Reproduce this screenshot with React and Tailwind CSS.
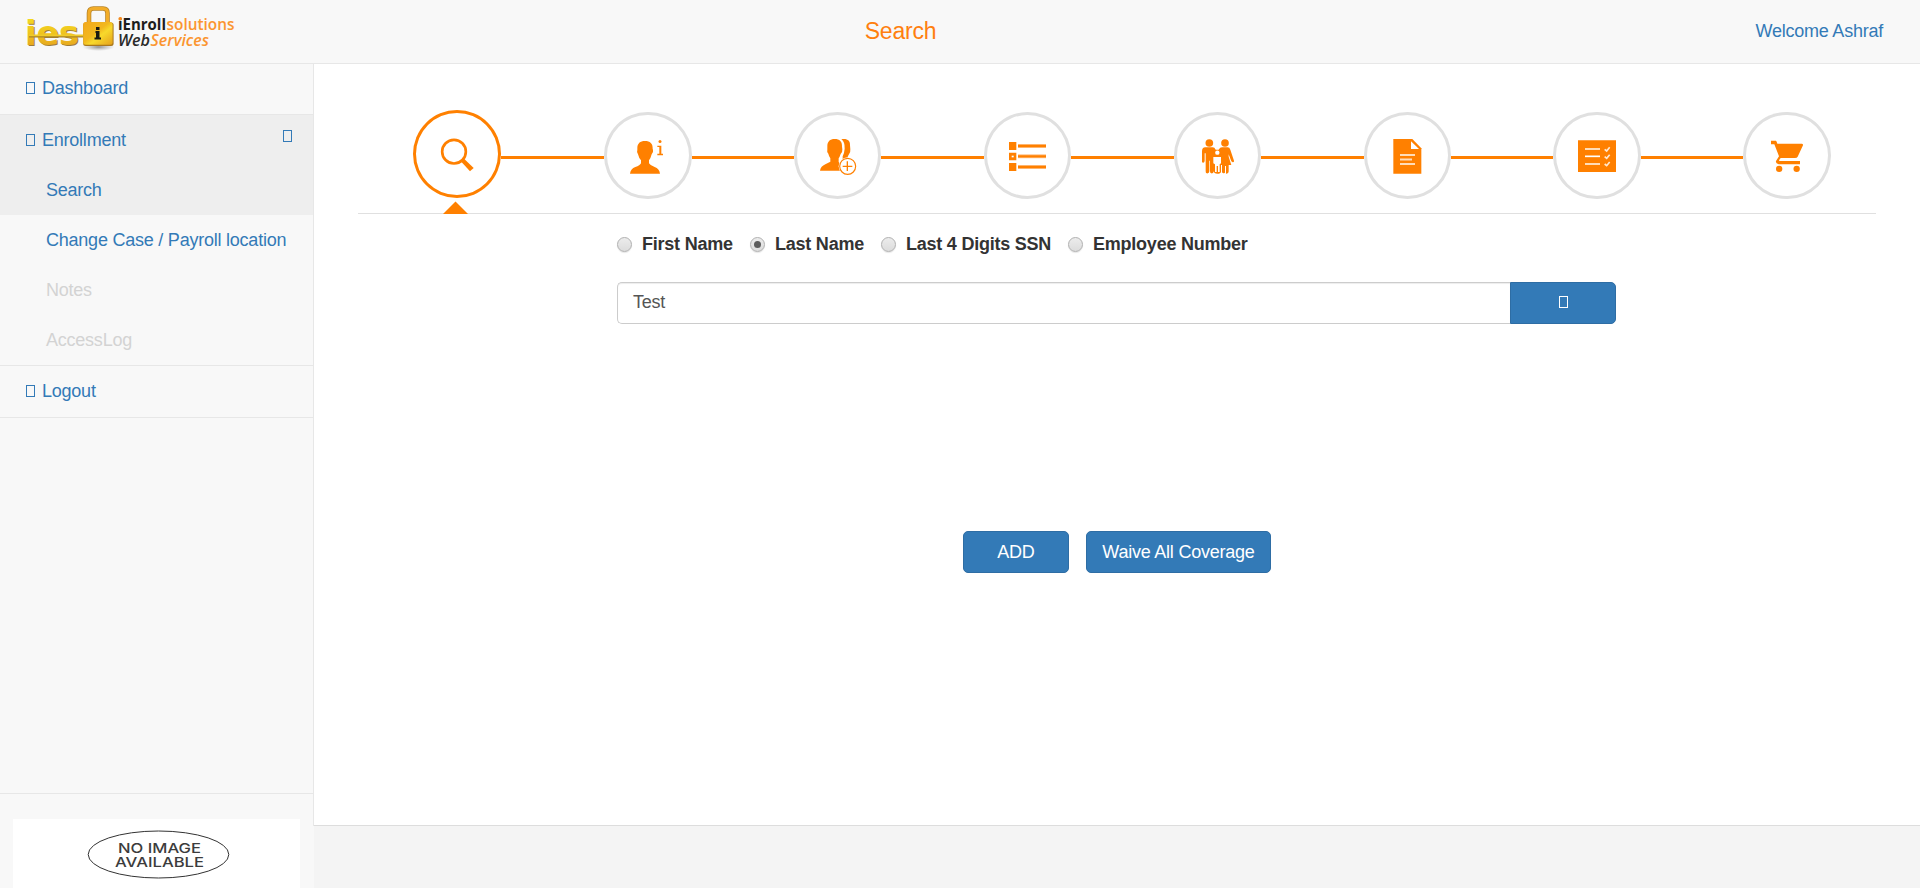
import React from "react";

function Glyph({ className = "" }) {
  return <span aria-hidden="true" className={`inline-block h-3 w-[9px] shrink-0 border ${className}`} />;
}

function Logo() {
  return (
    <svg className="h-[52px] w-[216px]" viewBox="24 2 216 52" aria-label="iEnroll solutions Web Services">
      <defs>
        <linearGradient id="gold" x1="0" y1="0" x2="0" y2="1">
          <stop offset="0" stopColor="#f4e020" />
          <stop offset="0.5" stopColor="#f0c41e" />
          <stop offset="1" stopColor="#e29a20" />
        </linearGradient>
        <linearGradient id="lock" x1="0" y1="0" x2="1" y2="1">
          <stop offset="0" stopColor="#f3a81c" />
          <stop offset="0.45" stopColor="#f2b81e" />
          <stop offset="0.6" stopColor="#f8d92c" />
          <stop offset="1" stopColor="#e5a01a" />
        </linearGradient>
        <radialGradient id="shade">
          <stop offset="0" stopColor="#777" stopOpacity="0.8" />
          <stop offset="1" stopColor="#999" stopOpacity="0" />
        </radialGradient>
      </defs>
      <g fontFamily="'DejaVu Sans', sans-serif" fontWeight="700" fontSize="34">
        <text
          x="25"
          y="44.800"
          textLength="54"
          lengthAdjust="spacingAndGlyphs"
          fill="url(#gold)"
          className="[text-shadow:1px_1px_0_#9c7c3a]"
        >
          ies
        </text>
      </g>
      <path d="M29 36.8H83" stroke="#a98225" strokeWidth="1.400" />
      <path d="M29 35.3H83" stroke="#f0cb2a" strokeWidth="1.800" />
      <ellipse cx="98.5" cy="47" rx="16" ry="4" fill="url(#shade)" />
      <path d="M89 24V13Q89 8.500 93.500 8.500H103Q107.500 8.500 107.500 13V24" fill="none" stroke="#b98528" strokeWidth="4.600" />
      <path d="M89 24V13Q89 8.500 93.500 8.500H103Q107.500 8.500 107.500 13V24" fill="none" stroke="#f2ac28" strokeWidth="3" />
      <rect x="83.200" y="22.500" width="30.400" height="23.500" rx="2.500" fill="#a9781d" />
      <rect x="83.200" y="22" width="29.400" height="22.800" rx="2.500" fill="url(#lock)" />
      <path d="M95.500 31H99.500V37.500H101V39.500H94.500V37.500H96V33H95.500ZM96 27H99.500V30H96Z" fill="#1b1a12" />
      <g fontFamily="'Open Sans', 'Noto Sans', sans-serif" fontSize="16.500">
        <text x="118" y="30" fontWeight="700" fill="#1d1d1b" textLength="48" lengthAdjust="spacingAndGlyphs">iEnroll</text>
        <text x="166.500" y="30" fontWeight="600" fill="#fb9530" textLength="68" lengthAdjust="spacingAndGlyphs">solutions</text>
        <text x="118" y="45.500" fontWeight="600" fontStyle="italic" fill="#2a2a2a" textLength="32" lengthAdjust="spacingAndGlyphs">Web</text>
        <text x="150.500" y="45.500" fontWeight="600" fontStyle="italic" fill="#fb9530" textLength="58.500" lengthAdjust="spacingAndGlyphs">Services</text>
      </g>
      <rect x="118.500" y="17" width="3.600" height="3.200" rx="1.500" fill="#f58a20" />
    </svg>
  );
}

const steps = [
  {
    name: "Search",
    circle: "w-[88px]",
    line: "w-[103px]",
    view: "189 60 264 264",
    art: (
      <>
        <circle cx="312" cy="185" r="35.500" fill="none" stroke="#ff8000" strokeWidth="8" />
        <path d="M331 212 340 204 371 234 360 244Z" />
      </>
    ),
  },
  {
    name: "Personal information",
    circle: "w-[88px]",
    line: "w-[102px]",
    view: "762 66 264 261",
    art: (
      <>
        <path d="M885 153C900 153 909 161 908 176L909 180Q911 188 905 193Q902 205 897 211V220Q901 227 914 231Q928 236 930 251H840Q842 236 856 231Q870 227 873 220V211Q867 205 864 193Q859 188 862 180L862 174C862 161 870 153 885 153Z" />
        <circle cx="930" cy="154.500" r="4.500" />
        <path d="M922 167H934V191H939V196H922V191H928V171H922Z" />
      </>
    ),
  },
  {
    name: "Dependents",
    circle: "w-[87px]",
    line: "w-[103px]",
    view: "252 66 261 261",
    art: (
      <>
        <path d="M394 148C411 145 421 151 420 166L421 178Q422 187 417 193Q413 199 411 206L398 215V199Q403 189 404 176Q405 156 394 148Z" />
        <path d="M374 147C389 147 397 155 396 170L397 178Q398 187 392 192Q389 201 386 205V216Q392 221 388 230Q389 238 394 242H330Q332 229 346 223L361 215V205Q357 200 355 191Q350 186 352 178L352 168C352 155 360 147 374 147Z" />
        <circle cx="413" cy="229" r="27" fill="#fff" />
        <circle cx="413" cy="229" r="24" fill="none" stroke="#ff8000" strokeWidth="3.500" />
        <path d="M398 229H427M412 214V243" stroke="#ff8000" strokeWidth="4" />
      </>
    ),
  },
  {
    name: "Benefits",
    circle: "w-[87px]",
    line: "w-[103px]",
    view: "822 66 261 261",
    art: (
      <>
        <path d="M897 156H919V180H897ZM897 188H919V211H897ZM897 219H919V243H897Z" />
        <path d="M924 168H1008M924 199H1008M924 231H1008" stroke="#ffc690" strokeWidth="12" />
        <path d="M924 168H1008M924 199H1008M924 231H1008" stroke="#ff8000" strokeWidth="7" />
        <path d="M905 197H911V202H905Z" fill="#fff" />
      </>
    ),
  },
  {
    name: "Beneficiaries",
    circle: "w-[87px]",
    line: "w-[103px]",
    view: "222 66 261 261",
    art: (
      <>
        <circle cx="328" cy="159" r="11.500" />
        <circle cx="375" cy="159" r="11.500" />
        <path d="M316 172H338Q344 172 347 179H356Q360 172 366 172H383Q389 172 391 179L402 212Q403 217 398 217L394 214L386 193V200L394 225H386V244Q386 251 378 251V228H375V248Q368 253 366 246V225H363V245Q362 251 352 251Q342 251 341 244Q341 251 334 250Q330 250 330 244V212H328V244Q328 251 320 250Q317 250 317 244V190H314V213Q313 220 306 217V184Q306 172 316 172Z" />
        <circle cx="352" cy="188" r="6.500" fill="#fff" />
        <path d="M340 201H363V220L359 223V246H354V228H350V246H345V223L340 220Z" fill="#fff" />
      </>
    ),
  },
  {
    name: "Documents",
    circle: "w-[87px]",
    line: "w-[102px]",
    view: "792 66 261 261",
    art: (
      <>
        <path d="M880 147H937L964 175V251H880Z" />
        <path d="M933 154V177H957Z" fill="#fff" />
        <path d="M900 195H945M900 208.500H936M900 222H945" stroke="#ffdcb8" strokeWidth="6" />
      </>
    ),
  },
  {
    name: "Questions",
    circle: "w-[88px]",
    line: "w-[102px]",
    view: "219 66 264 261",
    art: (
      <>
        <path d="M294 151H408V246H294Z" />
        <path d="M315 177H360M315 222H360" stroke="#ffdcb8" strokeWidth="6" />
        <path d="M315 199H360" stroke="#fff" strokeWidth="5" />
        <path d="M374 178 380 183 389 172M374 200 380 205 389 194M374 222 380 227 389 216" fill="none" stroke="#ffe8d2" strokeWidth="5" />
      </>
    ),
  },
  {
    name: "Checkout",
    circle: "w-[88px]",
    view: "789 66 264 261",
    art: (
      <>
        <path d="M873 152H888Q890 153 892 161H966Q970 162 969 166L953 200Q951 204 945 204H902L897 211Q896 213 900 213H960V223H896Q886 221 888 213L897 199L883 163H873Z" />
        <circle cx="897.500" cy="236.500" r="9.500" />
        <circle cx="950" cy="236.500" r="9.500" />
      </>
    ),
  },
];

function Steps() {
  return (
    <ol className="flex items-start pl-[55px]">
      {steps.map((step, i) => (
        <li key={step.name} className="flex items-start">
          <div className={i === 0 ? "flex flex-col items-center" : "mt-0.5"}>
            <div
              className={`rounded-full inset-ring-[3px] ${step.circle} ${
                i === 0 ? "h-[88px] inset-ring-[#ff8000]" : "h-[87px] inset-ring-[#e0e0e0]"
              }`}
            >
              <svg viewBox={step.view} className="size-full" fill="#ff8000" aria-label={step.name}>
                {step.art}
              </svg>
            </div>
            {i === 0 && (
              <svg className="mt-[3px] mr-[3px] -mb-px h-[13px] w-[25px]" viewBox="0 0 25 13" fill="#ff8000">
                <path d="M0 13 12.500 0.500 25 13Z" />
              </svg>
            )}
          </div>
          {step.line && <div className={`mt-[46px] h-[3px] bg-[#ff8000] ${step.line}`} />}
        </li>
      ))}
    </ol>
  );
}

const options = [
  { label: "First Name", width: "w-[133px]" },
  { label: "Last Name", width: "w-[131px]", checked: true },
  { label: "Last 4 Digits SSN", width: "w-[187px]" },
  { label: "Employee Number", width: "w-[190px]" },
];

function Radio({ checked }) {
  return (
    <span className="flex size-[15px] shrink-0 items-center justify-center rounded-full border border-[#b0b0b0] bg-linear-to-b from-[#ececec] to-[#dcdcdc] shadow-[0_1px_1px_rgba(0,0,0,0.1)]">
      {checked && <span className="size-[7px] rounded-full bg-[#5c5c5c]" />}
    </span>
  );
}

function Sidebar() {
  return (
    <aside className="flex w-[314px] shrink-0 flex-col bg-[#f8f8f8] text-[#337ab7]">
      <nav className="flex h-[762px] flex-col border-r border-[#e7e7e7]">
        <a className="flex h-[51px] items-center gap-[7px] border-b border-[#e7e7e7] pb-0.5 pl-[26px]">
          <Glyph />
          Dashboard
        </a>
        <div className="border-b border-[#e7e7e7]">
          <a className="flex h-[50px] items-center gap-[7px] bg-[#eee] pr-[21px] pl-[26px]">
            <Glyph />
            Enrollment
            <Glyph className="mb-2 ml-auto" />
          </a>
          <a className="flex h-[50px] items-center bg-[#eee] pl-[46px]">Search</a>
          <a className="flex h-[50px] items-center pl-[46px]">Change Case / Payroll location</a>
          <a className="flex h-[50px] items-center pl-[46px] text-[#d3d3d3]">Notes</a>
          <a className="flex h-[50px] items-center pl-[46px] text-[#d3d3d3]">AccessLog</a>
        </div>
        <a className="flex h-[52px] items-center gap-[7px] border-b border-[#e7e7e7] pb-0.5 pl-[26px]">
          <Glyph />
          Logout
        </a>
        <div className="mt-auto h-[33px] border-t border-[#e7e7e7]" />
      </nav>
      <div className="-mt-[7px] mr-[14px] ml-[13px] flex-1 overflow-hidden bg-white">
        <svg className="h-[69px] w-[287px]" viewBox="13 819 287 69">
          <ellipse cx="158.500" cy="854.500" rx="70.300" ry="23.500" fill="none" stroke="#333" strokeWidth="1" />
          <g fontFamily="Inter, sans-serif" fontWeight="500" fontSize="13.700" fill="#3c3c3c" letterSpacing="0">
            <text x="118" y="852.500" textLength="83" lengthAdjust="spacingAndGlyphs">NO IMAGE</text>
            <text x="115" y="867" textLength="89" lengthAdjust="spacingAndGlyphs">AVAILABLE</text>
          </g>
        </svg>
      </div>
    </aside>
  );
}

export default function App() {
  return (
    <div className="flex h-[888px] w-full flex-col overflow-hidden bg-[#f4f4f4] font-['Liberation_Sans',Arial,sans-serif] text-[18px] leading-[26px] tracking-[-0.23px] text-[#333]">
      <header className="grid h-16 grid-cols-[1fr_auto_1fr] items-start border-b border-[#e7e7e7] bg-[#f8f8f8] pr-[37px] pl-6">
        <div className="pt-0.5 tracking-normal">
          <Logo />
        </div>
        <h1 className="mr-[106px] pt-[18px] text-[23px] text-[#ff7f0e]">Search</h1>
        <a className="justify-self-end pt-[18px] text-[#337ab7]">Welcome Ashraf</a>
      </header>
      <div className="flex min-h-0 flex-1">
        <Sidebar />
        <main className="h-[762px] flex-1 border-b border-[#ddd] bg-white pt-[46px] pr-[44px] pl-[44px]">
          <div className="flex h-[104px] flex-col border-b border-[#e0e0e0]">
            <Steps />
          </div>
          <div className="ml-[259px] w-[999px]">
            <div className="flex pt-[17px]">
              {options.map((o) => (
                <label key={o.label} className={`flex h-[26px] items-center gap-2.5 font-bold whitespace-nowrap ${o.width}`}>
                  <Radio checked={o.checked} />
                  {o.label}
                </label>
              ))}
            </div>
            <div className="mt-[25px] flex">
              <div className="flex h-[42px] flex-1 items-center rounded-l-[5px] border border-r-0 border-[#ccc] px-[15px] pb-0.5 text-[#555] shadow-[inset_0_1px_1px_rgba(0,0,0,0.075)]">
                Test
              </div>
              <button className="flex h-[42px] w-[106px] items-center justify-center rounded-r-[5px] border border-[#2e6da4] bg-[#337ab7] pb-0.5 text-white">
                <Glyph />
              </button>
            </div>
            <div className="flex gap-[17px] pt-[207px] pl-[346px] text-white">
              <button className="h-[42px] w-[106px] rounded-[5px] border border-[#2e6da4] bg-[#337ab7]">ADD</button>
              <button className="h-[42px] w-[185px] rounded-[5px] border border-[#2e6da4] bg-[#337ab7] whitespace-nowrap">
                Waive All Coverage
              </button>
            </div>
          </div>
        </main>
      </div>
    </div>
  );
}
